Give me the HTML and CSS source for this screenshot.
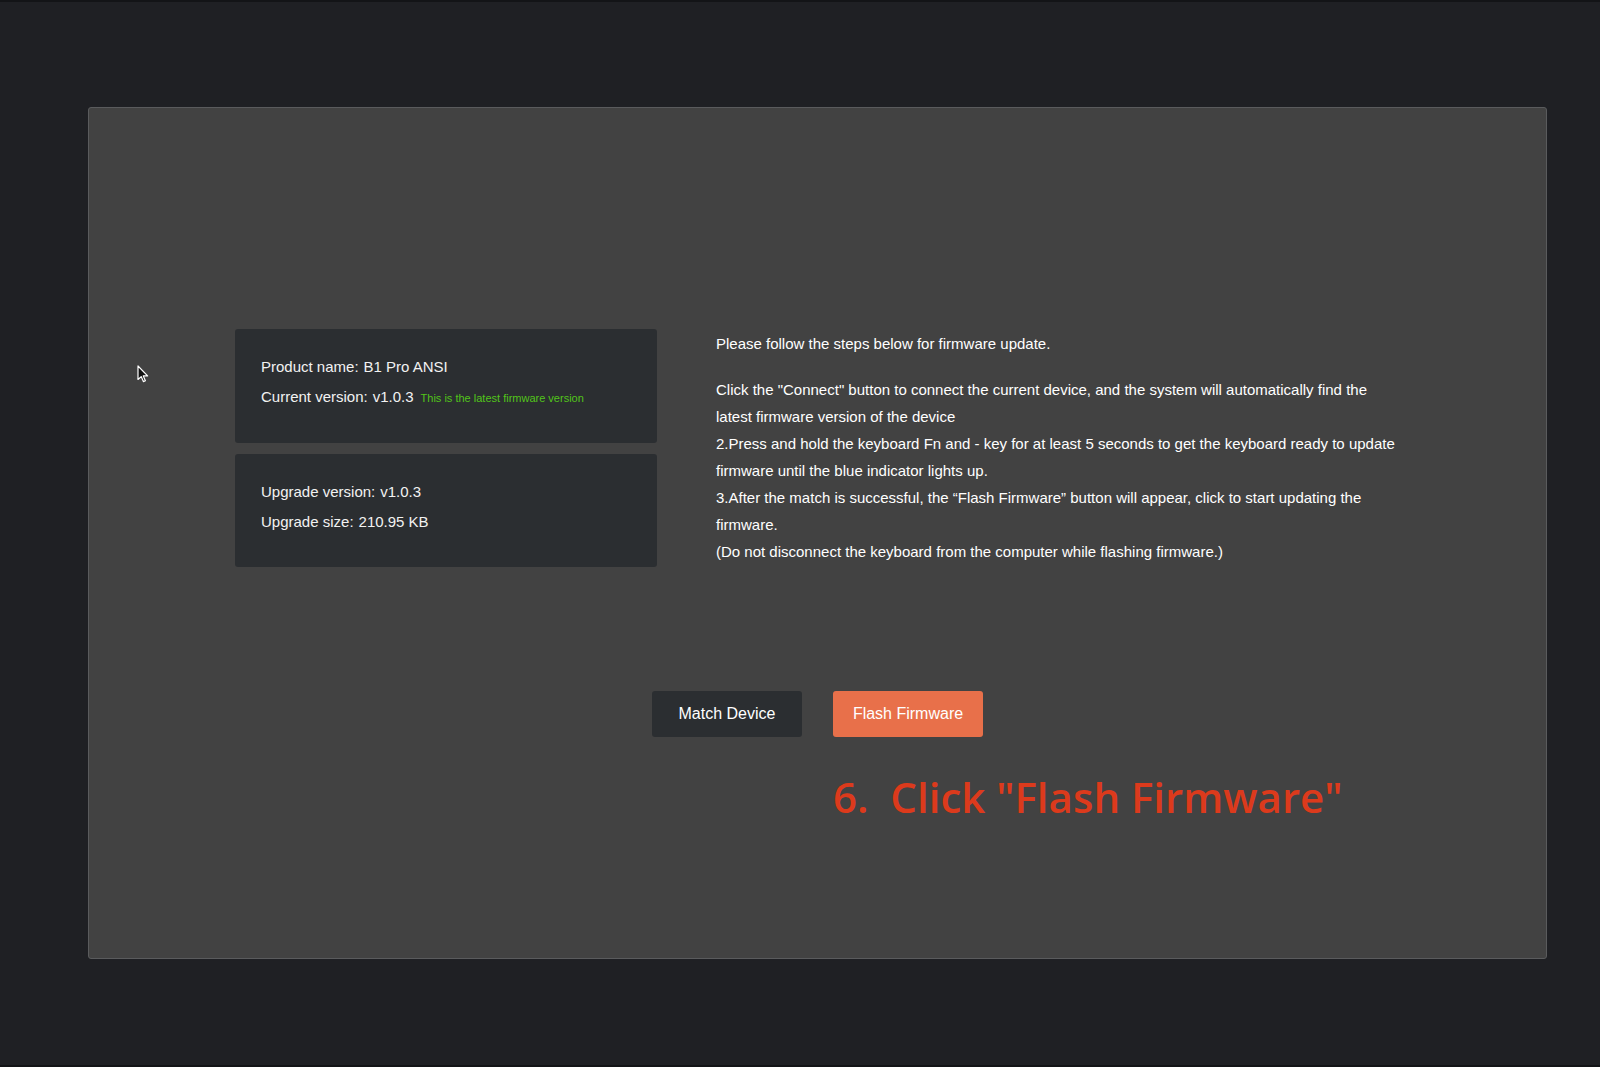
FILE: index.html
```html
<!DOCTYPE html>
<html lang="en">
<head>
    <meta charset="UTF-8">
    <meta name="viewport" content="width=device-width, initial-scale=1.0">
    <title>Firmware Update</title>
    <link rel="stylesheet" href="styles.css">
</head>
<body>
    <main class="panel">
        <!-- mouse cursor from the capture -->
        <svg class="cursor" width="12" height="18" viewBox="0 0 12 18">
            <path d="M1 1 L1 14.5 L4.2 11.6 L6.4 16.6 L8.4 15.7 L6.3 10.9 L10.6 10.9 Z" fill="#111" stroke="#fff" stroke-width="1.2" stroke-linejoin="round"/>
        </svg>

        <div class="content">
            <div class="cards">
                <div class="card">
                    <p><span class="label">Product name:</span><span class="value">B1 Pro ANSI</span></p>
                    <p><span class="label">Current version:</span><span class="value">v1.0.3</span><span class="note">This is the latest firmware version</span></p>
                </div>
                <div class="card">
                    <p><span class="label">Upgrade version:</span><span class="value">v1.0.3</span></p>
                    <p><span class="label">Upgrade size:</span><span class="value">210.95 KB</span></p>
                </div>
            </div>

            <div class="steps">
                <p class="intro">Please follow the steps below for firmware update.</p>
                <p>Click the "Connect" button to connect the current device, and the system will automatically find the latest firmware version of the device</p>
                <p>2.Press and hold the keyboard Fn and - key for at least 5 seconds to get the keyboard ready to update firmware until the blue indicator lights up.</p>
                <p>3.After the match is successful, the “Flash Firmware” button will appear, click to start updating the firmware.</p>
                <p>(Do not disconnect the keyboard from the computer while flashing firmware.)</p>
            </div>
        </div>

        <div class="actions">
            <button type="button" class="btn btn-dark">Match Device</button>
            <button type="button" class="btn btn-orange">Flash Firmware</button>
        </div>

        <div class="caption">6.&nbsp; Click "Flash Firmware"</div>
    </main>
</body>
</html>
```

FILE: styles.css
```css
body {
    margin: 0;
    padding: 0;
    height: 1067px;
    box-sizing: border-box;
    background-color: #1f2024;
    border-top: 2px solid #131417;
    border-bottom: 2px solid #131417;
    font-family: "Liberation Sans", Arial, sans-serif;
    color: #fff;
    overflow: hidden;
}

.panel {
    position: relative;
    box-sizing: border-box;
    width: 1459px;
    height: 852px;
    margin: 105px 0 0 88px;
    padding-top: 221px;
    background-color: #424242;
    border: 1px solid #5a5b5d;
    border-radius: 3px;
}

.cursor {
    position: absolute;
    left: 48px;
    top: 257px;
}

.content {
    display: flex;
    gap: 59px;
    margin-left: 146px;
}

.cards {
    display: flex;
    flex-direction: column;
    gap: 11px;
    width: 422px;
}

.card {
    background-color: #2b2e31;
    border-radius: 3px;
    padding: 23px 26px 30px;
    font-size: 15px;
    line-height: 30px;
    color: #f2f2f2;
}

.card p {
    margin: 0;
}

.value {
    margin-left: 5px;
}

.note {
    margin-left: 7px;
    font-size: 11px;
    color: #52c41a;
}

.steps {
    width: 690px;
    padding-top: 1px;
    font-size: 15px;
    line-height: 27px;
}

.steps p {
    margin: 0;
}

.steps .intro {
    margin-bottom: 19px;
}

.actions {
    display: flex;
    justify-content: center;
    gap: 31px;
    margin-top: 124px;
}

.btn {
    width: 150px;
    height: 46px;
    border: none;
    border-radius: 3px;
    font-family: "Liberation Sans", Arial, sans-serif;
    font-size: 16px;
    color: #fff;
    cursor: pointer;
}

.btn-dark {
    background-color: #2b2e31;
}

.btn-orange {
    background-color: #e8704a;
}

.caption {
    margin: 31px 0 0 744px;
    font-family: "Open Sans", sans-serif;
    font-weight: 600;
    font-size: 42px;
    line-height: 58px;
    color: #dc3a1c;
    white-space: nowrap;
}
```
